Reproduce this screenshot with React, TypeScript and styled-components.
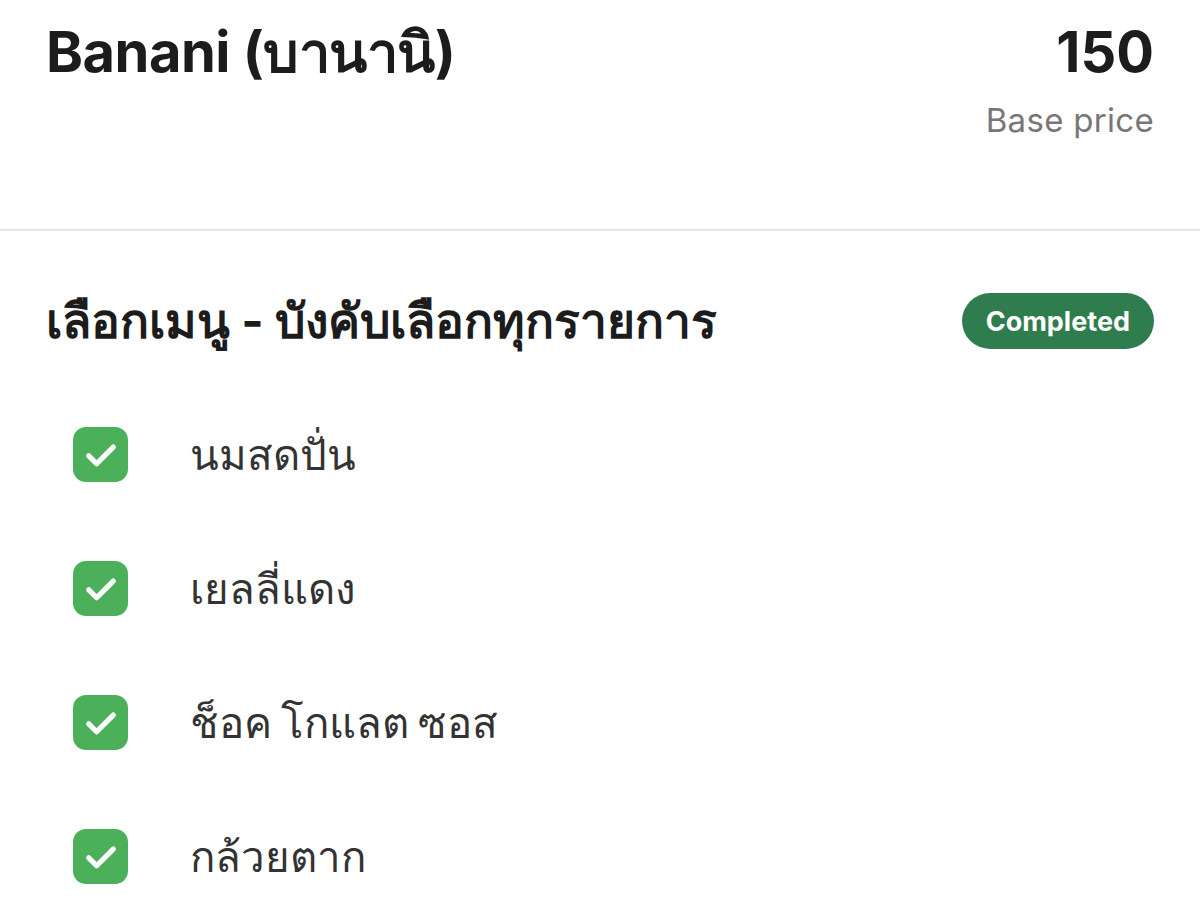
import React from 'react'
import styled, { createGlobalStyle } from 'styled-components'

const GlobalStyle = createGlobalStyle`
  html, body {
    margin: 0;
    padding: 0;
    background: #ffffff;
  }
  body {
    font-family: Inter, "Noto Sans", "Liberation Sans", sans-serif;
    color: #1c1c1c;
  }
`

const options = ['นมสดปั่น', 'เยลลี่แดง', 'ช็อค โกแลต ซอส', 'กล้วยตาก']

const CheckIcon: React.FC = () => (
  <svg width="42" height="42" viewBox="0 0 24 24" fill="none" stroke="#ffffff" strokeWidth="3" strokeLinecap="round" strokeLinejoin="round">
    <path d="M5 12.5l4.5 4.5L19 7.5" />
  </svg>
)

export default function App() {
  return (
    <Page>
      <GlobalStyle />
      <Header>
        <Title>Banani (บานานิ)</Title>
        <PriceBox>
          <Price>150</Price>
          <PriceLabel>Base price</PriceLabel>
        </PriceBox>
      </Header>
      <Divider />
      <Section>
        <SectionHead>
          <SectionTitle>เลือกเมนู - บังคับเลือกทุกรายการ</SectionTitle>
          <Badge>Completed</Badge>
        </SectionHead>
        <OptionList>
          {options.map((item, index) => (
            <OptionRow key={index}>
              <Checkbox>
                <CheckIcon />
              </Checkbox>
              <OptionLabel>{item}</OptionLabel>
            </OptionRow>
          ))}
        </OptionList>
      </Section>
    </Page>
  )
}

const Page = styled.div`
  width: 1200px;
  height: 909px;
  overflow: hidden;
  background: #ffffff;
`

const Header = styled.header`
  display: flex;
  justify-content: space-between;
  align-items: flex-start;
  padding: 16px 46px 0 46px;
  height: 229px;
  box-sizing: border-box;
`

const Title = styled.h1`
  margin: 0;
  font-size: 56px;
  font-weight: 700;
  line-height: 72px;
  letter-spacing: -0.5px;
  color: #1c1c1c;
`

const PriceBox = styled.div`
  display: flex;
  flex-direction: column;
  align-items: flex-end;
`

const Price = styled.div`
  font-size: 56px;
  font-weight: 700;
  line-height: 72px;
  color: #1c1c1c;
`

const PriceLabel = styled.div`
  margin-top: 10px;
  font-size: 33px;
  line-height: 44px;
  letter-spacing: 0.3px;
  color: #777777;
`

const Divider = styled.hr`
  margin: 0;
  border: none;
  height: 2px;
  background: #e6e6e6;
`

const Section = styled.section`
  padding: 62px 46px 0 46px;
`

const SectionHead = styled.div`
  display: flex;
  justify-content: space-between;
  align-items: center;
  height: 56px;
`

const SectionTitle = styled.h2`
  margin: 0;
  font-size: 48px;
  font-weight: 700;
  color: #1c1c1c;
`

const Badge = styled.span`
  display: inline-flex;
  align-items: center;
  justify-content: center;
  height: 56px;
  padding: 0 24px;
  border-radius: 28px;
  background: #2f7d4e;
  color: #ffffff;
  font-size: 27px;
  font-weight: 700;
`

const OptionList = styled.ul`
  list-style: none;
  margin: 0;
  padding: 78px 0 0 27px;
  display: flex;
  flex-direction: column;
  gap: 79px;
`

const OptionRow = styled.li`
  display: flex;
  align-items: center;
  height: 55px;
`

const Checkbox = styled.span`
  display: flex;
  align-items: center;
  justify-content: center;
  width: 55px;
  height: 55px;
  border-radius: 13px;
  background: #4caf59;
  flex-shrink: 0;
`

const OptionLabel = styled.span`
  margin-left: 62px;
  font-size: 42px;
  word-spacing: -3px;
  color: #333333;
`
